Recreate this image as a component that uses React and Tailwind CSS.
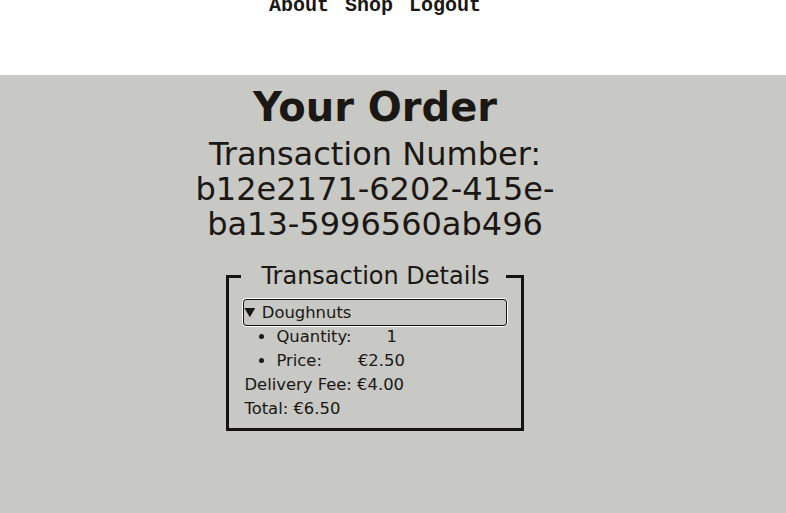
import React from 'react';

export default function App(){
  const order = {
    id: 'b12e2171-6202-415e-ba13-5996560ab496',
    item: 'Doughnuts',
    quantity: 1,
    price: '€2.50',
    delivery: '€4.00',
    total: '€6.50',
  };

  return (
    <div className="min-h-[513px] bg-white font-['DejaVu_Sans',sans-serif] text-[#1a1714]">
      {/* Nav */}
      <div className="h-[75px] w-[750px] overflow-hidden">
        <nav className="-mt-[6px] flex justify-center gap-4 font-['Liberation_Mono',monospace] text-[20px] font-bold leading-[24px]">
          <a href="#">About</a>
          <a href="#">Shop</a>
          <a href="#">Logout</a>
        </nav>
      </div>

      {/* Order */}
      <main className="min-h-[438px] bg-[#c8c8c4]">
        <div className="flex w-[750px] flex-col items-center text-center">
          <h1 className="mt-[10px] text-[40px] font-bold leading-[44px]">Your Order</h1>
          <h2 className="mt-[8px] w-[380px] text-[32px] leading-[35px]">
            Transaction Number: {order.id}
          </h2>

          <fieldset className="mt-[20px] w-[296px] border-[3px] border-[#151310] px-[15px] pb-[7px] text-left text-[16.4px]">
            <legend className="-ml-[3px] whitespace-nowrap pl-[20px] pr-[16px] text-[24px] leading-[28px]">Transaction Details</legend>
            <details open className="mt-[10px]">
              <summary className="h-[25px] cursor-pointer rounded-[3px] leading-[25px] shadow-[0_0_0_1px_#151310,0_0_0_2px_#ffffff]">
                {order.item}
              </summary>
              <ul className="list-disc pl-8 leading-[24px]">
                <li>Quantity:<span className="ml-[35px]">{order.quantity}</span></li>
                <li>Price:<span className="ml-[36px]">{order.price}</span></li>
              </ul>
            </details>
            <p className="leading-[24px]">Delivery Fee: {order.delivery}</p>
            <p className="leading-[24px]">Total: {order.total}</p>
          </fieldset>
        </div>
      </main>
    </div>
  );
}
